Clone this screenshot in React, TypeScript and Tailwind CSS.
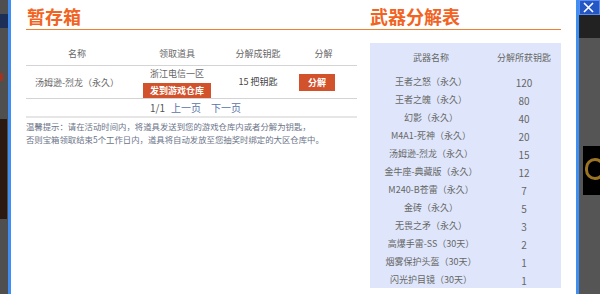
import React from "react";

const F = { fontFamily: '"Noto Sans CJK SC", "Noto Sans", sans-serif' };

const weapons: [string, string][] = [
  ["王者之怒（永久）", "120"],
  ["王者之魄（永久）", "80"],
  ["幻影（永久）", "40"],
  ["M4A1-死神（永久）", "20"],
  ["汤姆逊-烈龙（永久）", "15"],
  ["金牛座-典藏版（永久）", "12"],
  ["M240-B苍雷（永久）", "7"],
  ["金砖（永久）", "5"],
  ["无畏之矛（永久）", "3"],
  ["高爆手雷-SS（30天）", "2"],
  ["烟雾保护头盔（30天）", "1"],
  ["闪光护目镜（30天）", "1"],
];

export default function App() {
  return (
    <div className="flex w-[600px] h-[294px] overflow-hidden bg-[#555555]" style={F}>
      {/* left strip */}
      <div className="relative w-[8px] h-full bg-[#4f4f4f] flex flex-col">
        <div className="h-[14px]" />
        <div className="h-[14px] bg-[#1d2f57]" />
        <div className="h-[45px]" />
        <div className="h-[8px] w-[3px] bg-[#a0341e]" />
        <div className="h-[38px]" />
        <div className="h-[100px] w-[7px] bg-[#2a1a12]" />
      </div>
      <div className="w-[3px] h-full bg-[#3f8ff2]" />

      {/* main white panel */}
      <div className="w-[565px] h-full bg-white px-[15px]">
        {/* header */}
        <div className="flex h-[30px] border-b border-[#f08030]">
          <div className="w-[344px] pl-[1px] pt-[5px] text-[18px] leading-[22px] font-bold text-[#f26322]">暂存箱</div>
          <div className="pt-[5px] text-[18px] leading-[22px] font-bold text-[#f26322]">武器分解表</div>
        </div>

        <div className="flex mt-[13px]">
          {/* left */}
          <div className="w-[331px] text-[9px] text-[#666666]">
            <div className="grid grid-cols-[102px_98px_64px_67px] h-[23px] items-center text-center border-b border-[#d4d4d4]">
              <div>名称</div>
              <div>领取道具</div>
              <div>分解成钥匙</div>
              <div>分解</div>
            </div>
            <div className="grid grid-cols-[102px_98px_64px_67px] h-[33px] items-center text-center border-b border-[#d4d4d4]">
              <div className="pt-[1px]">汤姆逊-烈龙（永久）</div>
              <div className="flex flex-col items-center self-start pt-[2px]">
                <div className="leading-[12px]">浙江电信一区</div>
                <div className="mt-[3px] w-[68px] h-[15px] bg-[#d2522b] text-white font-bold leading-[15px]">发到游戏仓库</div>
              </div>
              <div className="text-[#444]">15 把钥匙</div>
              <div className="flex pl-[9px]">
                <div className="w-[36px] h-[17px] bg-[#d2522b] text-white font-bold leading-[17px]">分解</div>
              </div>
            </div>
            <div className="h-[17px] flex items-center justify-center gap-[6px] pl-[8px] text-[10px]">
              <span className="text-[#555]">1/1</span>
              <span className="text-[#5873a8]">上一页</span>
              <span className="text-[#5873a8] ml-[4px]">下一页</span>
            </div>
            <div className="h-[2px] bg-[#e6e6e6]" />
            <div className="mt-[2px] text-[8.4px] leading-[13px] text-[#6b7488]">
              <div>温馨提示：请在活动时间内，将道具发送到您的游戏仓库内或者分解为钥匙，</div>
              <div>否则宝箱领取结束5个工作日内，道具将自动发放至您抽奖时绑定的大区仓库中。</div>
            </div>
          </div>

          {/* right */}
          <div className="ml-[13px] w-[191px] h-[245px] bg-[#dfe6fb] text-[9px] text-[#666666]">
            <div className="flex h-[30px] items-center">
              <div className="w-[122px] text-center">武器名称</div>
              <div className="flex-1 text-center pr-[5px]">分解所获钥匙</div>
            </div>
            {weapons.map(([n, k]) => (
              <div key={n} className="flex h-[18px] items-center">
                <div className="w-[122px] text-center">{n}</div>
                <div className="flex-1 text-center pr-[5px] text-[10px]">{k}</div>
              </div>
            ))}
          </div>
        </div>
      </div>

      <div className="w-[3px] h-full bg-[#3f8ff2]" />
      {/* right strip */}
      <div className="flex-1 h-full bg-[#555555] flex flex-col">
        <div className="h-[15px] bg-[#2457c4] border border-[#5a8cf2] pl-[3px] pt-[1px]">
          <svg width="12" height="11" viewBox="0 0 12 11">
            <path d="M1 1 L10 10 M10 1 L1 10" stroke="#ffffff" strokeWidth="1.6" fill="none" />
          </svg>
        </div>
        <div className="h-[23px] bg-[#222222]" />
        <div className="h-[108px]" />
        <div className="h-[49px] ml-[4px] bg-black relative overflow-hidden">
          <div className="absolute left-[2px] top-[12px] w-[20px] h-[22px] rounded-full border-[3px] border-[#9a7420]" />
        </div>
      </div>
    </div>
  );
}
